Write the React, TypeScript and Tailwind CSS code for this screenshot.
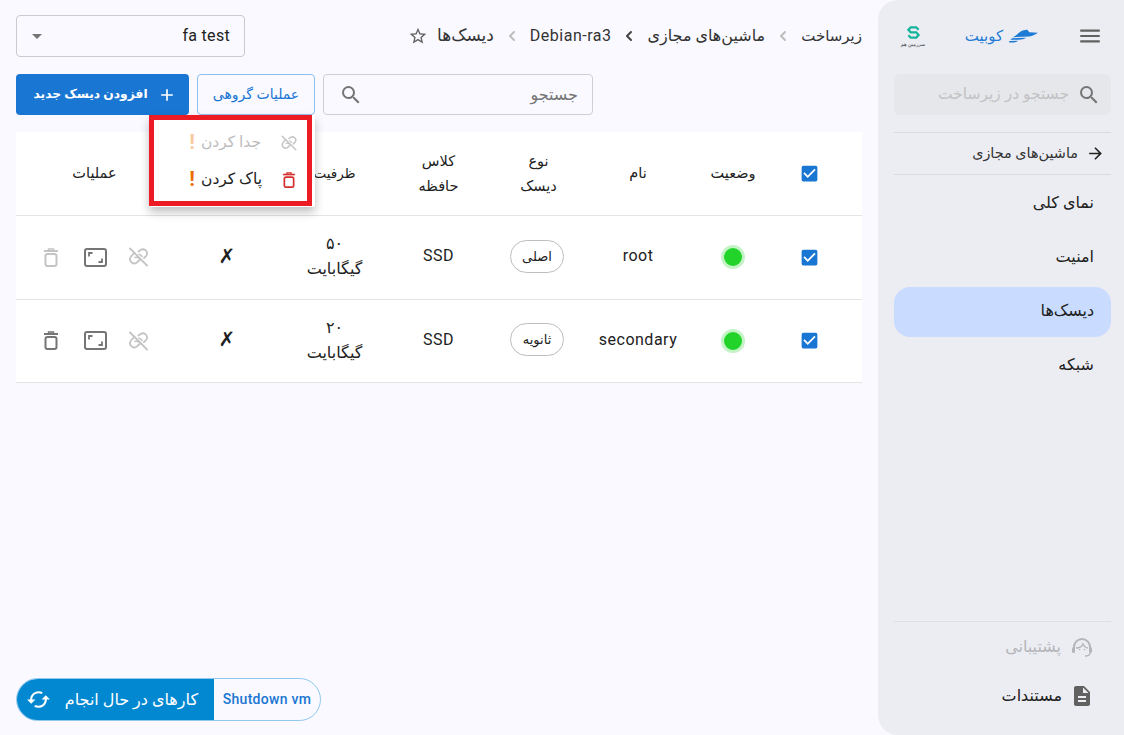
import {ChevronLeft} from 'lucide-react';
import {
  MdAdd,
  MdArrowForward,
  MdCached,
  MdCheckBox,
  MdDescription,
  MdMenu,
  MdOutlineStarBorder,
  MdSearch,
} from 'react-icons/md';

const font = 'font-["Roboto","DejaVu_Sans",sans-serif]';
const grid = 'grid grid-cols-[84px_90px_100px_99px_101px_107px_108px_157px]';

const disks = [
  {name: 'root', type: 'اصلی', size: '۵۰', canDelete: false},
  {name: 'secondary', type: 'ثانویه', size: '۲۰', canDelete: true},
];

const navItems = ['نمای کلی', 'امنیت', 'دیسک‌ها', 'شبکه'];

function LinkOffIcon({className}: {className: string}) {
  return (
    <svg viewBox="0 0 21 20" className={className} fill="none" stroke="currentColor" strokeWidth="1.800" strokeLinecap="round">
      <path d="M2 1.500l17 17" />
      <path d="M10.500 4.500l2-1.500a4.200 4.200 0 0 1 6 5.500l-2.500 2.700" />
      <path d="M6.500 5.800L3 9.500a4.200 4.200 0 0 0 5.500 6.200l3.500-3" />
      <path d="M7 10.500c1.500-.5 2.500-.3 3.500.5M14 9.500c-.8-1.300-1.800-2-3-2.300" strokeWidth="1.500" />
    </svg>
  );
}

function TrashIcon({className}: {className: string}) {
  return (
    <svg viewBox="0 0 14 19" className={className} fill="none" stroke="currentColor" strokeWidth="2">
      <path d="M0 3h14" />
      <path d="M4.500 2.500V1h5v1.500" strokeWidth="1.400" />
      <rect x="1.500" y="6" width="11" height="12" rx="2" />
    </svg>
  );
}

function ResizeIcon() {
  return (
    <svg viewBox="0 0 23 19" className="h-[19px] w-[23px] text-[#757575]" fill="none" stroke="currentColor">
      <rect x="1" y="1" width="21" height="17" rx="2" strokeWidth="2" />
      <path d="M5 8.500V5h3.500M18 10.500V14h-3.500" strokeWidth="1.800" />
    </svg>
  );
}

function BoatLogo() {
  return (
    <svg viewBox="0 0 30 14" className="h-[14px] w-[29px] text-[#1f7ad6]" fill="currentColor">
      <path d="M10 4C13 1.500 16 .5 19 .6l2 2.600 9 .5c-3 2-6 3.400-9 3.900L4 8.200C6 7.400 8 6 10 4z" />
      <path d="M3 9.300l15-.4c-2 1.300-5 2-8 2.100L1.500 11z" />
      <path d="M0 12.300l10-.3c-2 1-4 1.700-7 1.700H.5z" />
    </svg>
  );
}

function BrandMark() {
  return (
    <div className="flex w-[26px] flex-col items-center">
      <svg viewBox="0 0 16 14" className="h-[13px] w-[15px] text-[#17b39b]" fill="none" stroke="currentColor" strokeWidth="2.400">
        <path d="M13.500 4L11 1.500H5L2.500 4 5 6.800h6l2.500 2.900L11 12.500H5L2.500 10" />
      </svg>
      <span className="mt-[2px] whitespace-nowrap text-[5px] leading-[6px] text-[#333]">سرزمین هم</span>
    </div>
  );
}

function SupportIcon() {
  return (
    <svg viewBox="0 0 22 20" className="h-5 w-[22px] text-[#b5b5b9]" fill="none" stroke="currentColor" strokeWidth="2">
      <path d="M3 13V10a8 8 0 0 1 16 0v3" />
      <path d="M5 11c3 0 6-1.500 7-4 1 2 3 4 5 4" strokeWidth="1.400" />
      <rect x="1" y="10" width="3" height="6" rx="1.500" fill="currentColor" stroke="none" />
      <rect x="18" y="10" width="3" height="6" rx="1.500" fill="currentColor" stroke="none" />
      <path d="M19 16c0 2-2 3-5 3" strokeWidth="1.400" />
      <circle cx="8.500" cy="12.500" r=".8" fill="currentColor" stroke="none" />
      <circle cx="13.500" cy="12.500" r=".8" fill="currentColor" stroke="none" />
    </svg>
  );
}

export default function App() {
  return (
    <div dir="rtl" className={`${font} flex h-[735px] w-[1124px] overflow-hidden bg-[#f9f9ff] text-[#212121]`}>
      <aside className="flex h-full w-[246px] shrink-0 flex-col rounded-l-[20px] bg-[#ecedf3] pl-[16px] pr-[13px]">
        <div className="flex h-[74px] items-center justify-between pb-[2px] pl-[6px] pr-[8px]">
          <MdMenu className="text-[26px] text-[#616161]" />
          <div className="flex items-center gap-[6px]">
            <BoatLogo />
            <span className="text-[15px] text-[#1f7ad6]">کوبیت</span>
          </div>
          <BrandMark />
        </div>
        <div className="flex h-[41px] items-center gap-[8px] rounded-[6px] bg-[#e6e7ea] px-[10px]">
          <MdSearch className="text-[24px] text-[#757575]" />
          <span className="text-[15.500px] text-[#c2c2c4]">جستجو در زیرساخت</span>
        </div>
        <div className="mt-[17px] flex h-[43px] items-center gap-[8px] border-y border-[#d9d9df] px-[6px]">
          <MdArrowForward className="text-[19px] text-[#212121]" />
          <span className="text-[14.400px] text-[#333]">ماشین‌های مجازی</span>
        </div>
        <nav className="mt-[4px] flex flex-col gap-[4px]">
          {navItems.map((item) => (
            <div
              key={item}
              className={`flex h-[50px] items-center rounded-[16px] pb-[2px] pr-[17px] text-[16px] ${
                item === 'دیسک‌ها' ? 'bg-[#c9dcff]' : ''
              }`}
            >
              {item}
            </div>
          ))}
        </nav>
        <div className="mt-auto border-t border-[#dedfe4] pb-[15px]">
          <div className="flex h-[50px] items-center gap-[10px] pr-[18px] text-[16px] text-[#b5b5b9]">
            <SupportIcon />
            <span>پشتیبانی</span>
          </div>
          <div className="flex h-[48px] items-center gap-[8px] pr-[17px] text-[16px]">
            <MdDescription className="text-[24px] text-[#616161]" />
            <span>مستندات</span>
          </div>
        </div>
      </aside>

      <main className="flex h-full flex-1 flex-col px-[16px] pb-[14px] pt-[15px]">
        <div className="flex h-[42px] items-center justify-between">
          <div className="flex items-center text-[16px] text-[#333]">
            <span className="text-[15px]">زیرساخت</span>
            <ChevronLeft size={16} strokeWidth={3} className="mx-[10px] text-[#bdbdbd]" />
            <span>ماشین‌های مجازی</span>
            <ChevronLeft size={16} strokeWidth={3} className="mx-[10px] text-[#424242]" />
            <span className="tracking-[0.5px]">Debian-ra3</span>
            <ChevronLeft size={16} strokeWidth={3} className="mx-[10px] text-[#bdbdbd]" />
            <span className="text-[17px]">دیسک‌ها</span>
            <MdOutlineStarBorder className="mr-[9px] text-[20px] text-[#616161]" />
          </div>
          <div className="flex h-[42px] w-[229px] items-center justify-between rounded-[4px] border border-[#c9c9cf] pl-[15px] pr-[14px] text-[16px] tracking-[0.3px]">
            <span>fa test</span>
            <span className="h-0 w-0 border-x-[5px] border-t-[5px] border-x-transparent border-t-[#757575]" />
          </div>
        </div>

        <div className="mt-[17px] flex h-[41px] justify-end gap-[8px]">
          <div className="flex w-[270px] items-center justify-between rounded-[4px] border border-[#cfcfd4] pl-[15px] pr-[14px]">
            <span className="text-[16px] text-[#757575]">جستجو</span>
            <MdSearch className="text-[24px] text-[#757575]" />
          </div>
          <div className="relative">
            <button className="h-[41px] w-[118px] rounded-[4px] border border-[#90bfee] text-[14px] font-medium text-[#1976d2]">
              عملیات گروهی
            </button>
            <div className="absolute right-0 top-full z-10 h-[92px] w-[166px] rounded-[2px] bg-white shadow-[0_5px_10px_rgba(0,0,0,0.25)]">
              <div className="mr-auto flex h-[91px] w-[163px] flex-col justify-center border-[5px] border-[#ed1c24] pt-[1px]">
                <div className="flex h-[37px] items-center pr-[9px] text-[15.500px] text-[#bdbdbd]">
                  <LinkOffIcon className="h-[16px] w-[18px] text-[#c4c4c4]" />
                  <span className="mr-[19px]">جدا کردن</span>
                  <span className="mr-[6px] text-[21px] font-bold leading-none text-[#f9c9a0]">!</span>
                </div>
                <div className="flex h-[37px] items-center pr-[12px] text-[15.500px] text-[#212121]">
                  <TrashIcon className="h-[16px] w-[12px] text-[#d32f2f]" />
                  <span className="mr-[21px]">پاک کردن</span>
                  <span className="mr-[6px] text-[21px] font-bold leading-none text-[#ed6c02]">!</span>
                </div>
              </div>
            </div>
          </div>
          <button className="flex w-[173px] items-center justify-center gap-[9px] rounded-[4px] bg-[#1976d2] pl-[5px] text-[12.300px] font-bold text-white">
            <MdAdd className="text-[20px]" />
            افزودن دیسک جدید
          </button>
        </div>

        <div className="mt-[17px] bg-white text-[14.500px]">
          <div className={`${grid} h-[84px] items-center border-b border-[#e4e4e4] text-center leading-[25px]`}>
            <div className="flex justify-center pr-[22px]">
              <MdCheckBox className="text-[21px] text-[#1976d2]" />
            </div>
            <div>وضعیت</div>
            <div>نام</div>
            <div className="mx-auto w-[50px]">نوع دیسک</div>
            <div className="mx-auto w-[50px]">کلاس حافظه</div>
            <div className="text-[13.500px]">ظرفیت</div>
            <div />
            <div>عملیات</div>
          </div>
          {disks.map((disk) => (
            <div
              key={disk.name}
              className={`${grid} h-[83.500px] items-center border-b border-[#e4e4e4] text-center text-[16px] leading-[25px]`}
            >
              <div className="flex justify-center pr-[22px]">
                <MdCheckBox className="text-[21px] text-[#1976d2]" />
              </div>
              <div className="flex justify-center">
                <span className="h-[24px] w-[24px] rounded-full border-[3px] border-[#c4f3c5] bg-[#22d32a]" />
              </div>
              <div className="-mt-[3px] tracking-[0.5px]">{disk.name}</div>
              <div className="-mt-[2px] flex justify-center pr-[3px]">
                <span className="flex h-[33px] w-[54px] items-center justify-center rounded-full border border-[#bdbdbd] text-[13px]">
                  {disk.type}
                </span>
              </div>
              <div className="-mt-[3px] tracking-[0.5px]">SSD</div>
              <div className="-mt-[2px]">
                {disk.size}
                <br />
                گیگابایت
              </div>
              <div className="-mt-[2px] text-[20px] font-bold">✗</div>
              <div className="flex items-center justify-center pl-[3px]">
                <LinkOffIcon className="h-[20px] w-[21px] text-[#c4c4c4]" />
                <div className="mr-[21px]">
                  <ResizeIcon />
                </div>
                <TrashIcon className={`mr-[26px] h-[19px] w-[14px] ${disk.canDelete ? 'text-[#757575]' : 'text-[#c4c4c4]'}`} />
              </div>
            </div>
          ))}
        </div>

        <div className="mt-auto flex h-[43px] w-[305px] self-end overflow-hidden rounded-full border border-[#90c8ee]">
          <div className="flex w-[106px] items-center justify-center text-[14px] font-medium tracking-[0.3px] text-[#1976d2]">
            Shutdown vm
          </div>
          <div className="flex flex-1 items-center justify-between bg-[#0288d1] pl-[9px] pr-[16px] text-[16px] font-medium text-white">
            <span>کارهای در حال انجام</span>
            <MdCached className="text-[25px]" />
          </div>
        </div>
      </main>
    </div>
  );
}
